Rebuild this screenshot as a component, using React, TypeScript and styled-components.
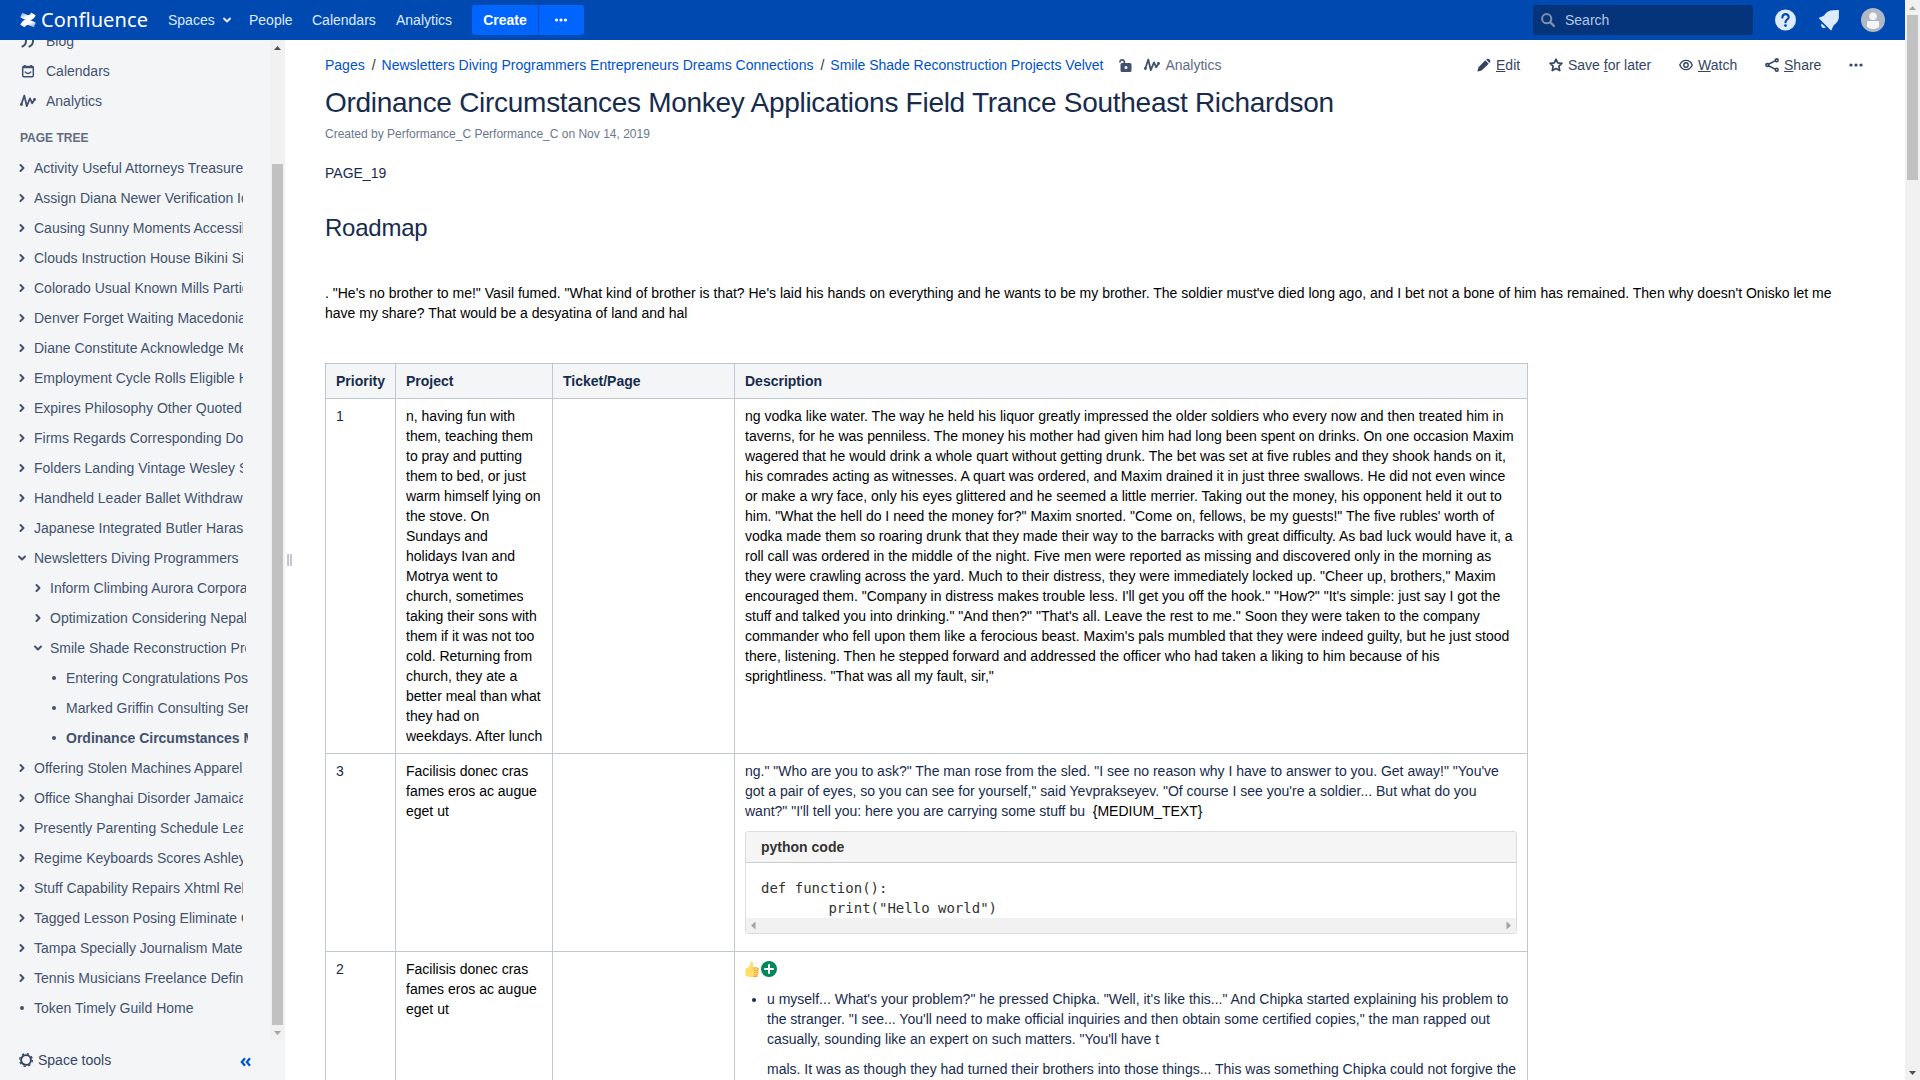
import React from "react";
import styled, { createGlobalStyle } from "styled-components";

const Global = createGlobalStyle`
  html, body { margin: 0; padding: 0; height: 1080px; overflow: hidden; background: #fff; }
  body { font-family: "Liberation Sans", Arial, sans-serif; font-size: 14px; line-height: 20px; color: #172b4d; }
  * { box-sizing: border-box; }
  svg { display: block; flex: none; }
`;

const Shell = styled.div`
  display: flex;
  width: 1920px;
  height: 1080px;
  overflow: hidden;
`;
const Page = styled.div`
  width: 1905px;
  height: 1080px;
  display: flex;
  flex-direction: column;
`;
const Header = styled.header`
  height: 40px;
  flex: none;
  background: #0049b0;
  display: flex;
  align-items: center;
  padding: 0 20px;
  color: #deebff;
`;
const Logo = styled.div`
  display: flex;
  align-items: center;
  gap: 5px;
  width: 148px;
`;
const LogoText = styled.span`
  font-family: "Noto Sans", sans-serif;
  font-size: 20px;
  line-height: 24px;
  letter-spacing: 0.1px;
  color: #fff;
`;
const NavItem = styled.a<{ $w: number }>`
  display: flex;
  align-items: center;
  gap: 7px;
  width: ${(p) => p.$w}px;
`;
const Create = styled.button<{ $w: number; $side: "l" | "r" }>`
  width: ${(p) => p.$w}px;
  height: 30px;
  margin: 0 ${(p) => (p.$side === "l" ? 1 : 0)}px 0 0;
  padding: 0 ${(p) => (p.$side === "l" ? 0 : 2)}px 0 0;
  border: 0;
  border-radius: ${(p) => (p.$side === "l" ? "3px 0 0 3px" : "0 3px 3px 0")};
  background: #0065ff;
  color: #fff;
  font: bold 14px "Liberation Sans", Arial, sans-serif;
  display: flex;
  align-items: center;
  justify-content: center;
`;
const Spacer = styled.div`
  flex: 1;
`;
const Search = styled.div`
  width: 220px;
  height: 30px;
  border-radius: 3px;
  background: #05347b;
  display: flex;
  align-items: center;
  padding-left: 8px;
  gap: 10px;
  color: #b3c7e8;
  margin-right: 21px;
`;
const HeaderIcons = styled.div`
  display: flex;
  align-items: center;
  gap: 21px;
  padding-left: 1px;
`;
const Body = styled.div`
  display: flex;
  height: 1040px;
`;
const Sidebar = styled.aside`
  width: 285px;
  background: #f4f5f7;
  display: flex;
  flex-direction: column;
  color: #42526e;
`;
const SideScroll = styled.div`
  height: 1000px;
  display: flex;
  overflow: hidden;
`;
const SideContent = styled.div`
  width: 270px;
  overflow: hidden;
`;
const SideLinks = styled.div`
  margin-top: -14px;
`;
const SideLink = styled.a`
  height: 30px;
  display: flex;
  align-items: center;
  padding-left: 20px;
  gap: 10px;
`;
const TreeTitle = styled.div`
  font-size: 12px;
  font-weight: bold;
  line-height: 20px;
  padding-left: 20px;
  margin: 12px 0 5px;
  color: #5e6c84;
`;
const TreeRow = styled.div<{ $level: number; $current?: boolean }>`
  height: 30px;
  display: flex;
  align-items: center;
  padding-left: ${(p) => 16 + p.$level * 16}px;
  font-weight: ${(p) => (p.$current ? "bold" : "normal")};
`;
const TreeIcon = styled.span`
  width: 12px;
  margin-right: 6px;
  display: flex;
  justify-content: center;
`;
const TreeLabel = styled.span<{ $w: number }>`
  width: ${(p) => p.$w}px;
  overflow: hidden;
  white-space: nowrap;
`;
const SideFooter = styled.div`
  height: 40px;
  display: flex;
  align-items: center;
  padding: 0 34px 0 19px;
  color: #344563;
`;
const FooterLabel = styled.span`
  flex: 1;
  padding-left: 5px;
`;
const Collapse = styled.span`
  padding-top: 3px;
`;
const Track = styled.div<{ $dir?: "row" | "column" }>`
  display: flex;
  flex-direction: ${(p) => p.$dir || "column"};
  justify-content: space-between;
  align-items: center;
  background: #f1f1f1;
  flex: none;
  ${(p) => (p.$dir === "row" ? "height: 15px;" : "width: 15px;")}
`;
const ThumbArea = styled.div<{ $top: number }>`
  flex: 1;
  width: 15px;
  padding: ${(p) => p.$top}px 2px 0;
`;
const Thumb = styled.div<{ $h: number }>`
  height: ${(p) => p.$h}px;
  background: #c1c1c1;
`;
const Splitter = styled.div`
  width: 10px;
  height: 12px;
  margin: 514px 0 0 2px;
  display: flex;
  gap: 1px;
`;
const Grip = styled.span`
  width: 2px;
  height: 12px;
  background: #c1c7d0;
`;
const Main = styled.main`
  flex: 1;
  padding: 15px 40px 0 28px;
  height: 1040px;
  overflow: hidden;
`;
const TopLine = styled.div`
  display: flex;
  height: 20px;
  align-items: center;
`;
const Crumb = styled.a`
  color: #0052cc;
  white-space: nowrap;
`;
const Slash = styled.span`
  padding: 0 6px 0 7px;
  color: #333;
`;
const Meta = styled.span`
  display: flex;
  align-items: center;
  gap: 5px;
  padding-left: 12px;
  color: #5e6c84;
`;
const Lock = styled.span`
  padding-left: 16px;
`;
const Action = styled.a<{ $w: number }>`
  display: flex;
  align-items: center;
  gap: 5px;
  width: ${(p) => p.$w}px;
  color: #344563;
  white-space: nowrap;
`;
const Title = styled.h1`
  font-size: 28px;
  font-weight: normal;
  line-height: 32px;
  letter-spacing: -0.28px;
  margin: 12px 0 0;
`;
const Byline = styled.div`
  font-size: 12px;
  line-height: 20px;
  margin-top: 5px;
  color: #6b778c;
`;
const Para = styled.p<{ $top: number; $black?: boolean }>`
  margin: ${(p) => p.$top}px 0 0;
  color: ${(p) => (p.$black ? "#000" : "#172b4d")};
`;
const H2 = styled.h2`
  font-size: 24px;
  font-weight: normal;
  line-height: 30px;
  letter-spacing: -0.24px;
  margin: 30px 0 0;
`;
const Table = styled.table`
  margin-top: 40px;
  width: 1203px;
  table-layout: fixed;
  border-collapse: collapse;
  th, td {
    border: 1px solid #c1c7d0;
    padding: 7px 10px;
    text-align: left;
    vertical-align: top;
  }
  td:nth-child(2) { padding-right: 9px; }
  th { background: #f4f5f7; }
`;
const Black = styled.span`
  color: #000;
`;
const CodePanel = styled.div`
  margin: 10px 0;
  border: 1px solid #ddd;
  border-radius: 3px;
  overflow: hidden;
  color: #333;
`;
const CodeTitle = styled.div`
  height: 31px;
  line-height: 20px;
  padding: 5px 15px;
  background: #f5f5f5;
  border-bottom: 1px solid #ccc;
  font-weight: bold;
`;
const Code = styled.pre`
  margin: 0;
  padding: 15px 15px 0;
  font: 14px/20px "DejaVu Sans Mono", monospace;
`;
const Emojis = styled.div`
  display: flex;
  align-items: center;
  height: 20px;
`;
const List = styled.ul`
  margin: 10px 0 0;
  padding-left: 22px;
`;

const Chevron = ({ down }: { down?: boolean }) => (
  <svg width="10" height="10" viewBox="0 0 10 10" fill="none" stroke="currentColor" strokeWidth="2" strokeLinecap="round" strokeLinejoin="round">
    <path d={down ? "M2 3.5 5 6.5 8 3.5" : "M3.5 2 6.5 5 3.5 8"} />
  </svg>
);
const Bullet = () => (
  <svg width="10" height="10" viewBox="0 0 10 10"><circle cx="5" cy="5" r="2" fill="currentColor" /></svg>
);
const Dots = ({ gap = 4.5 }: { gap?: number }) => (
  <svg width="14" height="14" viewBox="0 0 14 14" fill="currentColor">
    <circle cx={7 - gap} cy="7" r="1.6" /><circle cx="7" cy="7" r="1.6" /><circle cx={7 + gap} cy="7" r="1.6" />
  </svg>
);
const Pulse = () => (
  <svg width="16" height="14" viewBox="0 0 16 14" fill="none" stroke="#42526e" strokeWidth="1.8" strokeLinecap="round" strokeLinejoin="round">
    <path d="M1.3 10.500 4.300 1.500 6.800 12.200 10 4.400 12.200 9.300 14.500 5.500" />
    <path d="M1.400 10.500h.1M14.500 5.500h.1" strokeWidth="2.800" />
  </svg>
);
const Arrow = ({ d, dark }: { d: "up" | "down" | "left" | "right"; dark?: boolean }) => {
  const paths = { up: "M4 10 7.5 6 11 10Z", down: "M4 6 7.5 10 11 6Z", left: "M9.5 3.5 5 7.5 9.5 11.5Z", right: "M5.5 3.5 10 7.5 5.5 11.5Z" };
  return <svg width="15" height="15" viewBox="0 0 15 15"><path d={paths[d]} fill={dark ? "#505050" : "#a3a3a3"} /></svg>;
};

type Kind = "closed" | "open" | "leaf";
const tree: [string, number, Kind][] = [
  ["Activity Useful Attorneys Treasures", 0, "closed"],
  ["Assign Diana Newer Verification Identity", 0, "closed"],
  ["Causing Sunny Moments Accessible", 0, "closed"],
  ["Clouds Instruction House Bikini Size", 0, "closed"],
  ["Colorado Usual Known Mills Particular", 0, "closed"],
  ["Denver Forget Waiting Macedonia", 0, "closed"],
  ["Diane Constitute Acknowledge Medical", 0, "closed"],
  ["Employment Cycle Rolls Eligible Html", 0, "closed"],
  ["Expires Philosophy Other Quoted", 0, "closed"],
  ["Firms Regards Corresponding Double", 0, "closed"],
  ["Folders Landing Vintage Wesley Still", 0, "closed"],
  ["Handheld Leader Ballet Withdrawal", 0, "closed"],
  ["Japanese Integrated Butler Harassment", 0, "closed"],
  ["Newsletters Diving Programmers", 0, "open"],
  ["Inform Climbing Aurora Corporate", 1, "closed"],
  ["Optimization Considering Nepal", 1, "closed"],
  ["Smile Shade Reconstruction Projects", 1, "open"],
  ["Entering Congratulations Posted", 2, "leaf"],
  ["Marked Griffin Consulting Served", 2, "leaf"],
  ["Ordinance Circumstances Monkey", 2, "leaf"],
  ["Offering Stolen Machines Apparel", 0, "closed"],
  ["Office Shanghai Disorder Jamaica", 0, "closed"],
  ["Presently Parenting Schedule Learn", 0, "closed"],
  ["Regime Keyboards Scores Ashley", 0, "closed"],
  ["Stuff Capability Repairs Xhtml Rely", 0, "closed"],
  ["Tagged Lesson Posing Eliminate Only", 0, "closed"],
  ["Tampa Specially Journalism Material", 0, "closed"],
  ["Tennis Musicians Freelance Define", 0, "closed"],
  ["Token Timely Guild Home", 0, "leaf"],
];
const labelWidth = [209, 196, 182];

export default function App() {
  return (
    <Shell>
      <Global />
      <Page>
        <Header>
          <Logo>
            <svg width="16" height="16" viewBox="0 0 16 16">
              <defs>
                <linearGradient id="lg1" x1="1" y1="1" x2="0.2" y2="0.2"><stop offset="0" stopColor="#fff" stopOpacity=".45" /><stop offset=".6" stopColor="#fff" /></linearGradient>
                <linearGradient id="lg2" x1="0" y1="0" x2="0.8" y2="0.8"><stop offset="0" stopColor="#fff" stopOpacity=".45" /><stop offset=".6" stopColor="#fff" /></linearGradient>
              </defs>
              <path fill="url(#lg1)" d="M.6 11.9 C.3 12.4.4 12.8.8 13L4.100 15.100C4.500 15.300 4.900 15.200 5.200 14.800C6.500 12.700 7.300 12.500 9.700 13.600L13 15.100C13.400 15.300 13.800 15.100 14 14.700L15.500 11.300C15.700 10.900 15.500 10.500 15.100 10.300L11.800 8.800C7 6.600 3.300 7.300.6 11.900Z" />
              <path fill="url(#lg2)" d="M15.400 4.100C15.700 3.600 15.600 3.200 15.200 3L11.900.9C11.500.7 11.100.8 10.800 1.200C9.500 3.300 8.700 3.500 6.300 2.400L3 .9C2.600.7 2.200.9 2 1.300L.5 4.700C.3 5.100.5 5.500.9 5.700L4.200 7.200C9 9.400 12.700 8.700 15.400 4.100Z" />
            </svg>
            <LogoText>Confluence</LogoText>
          </Logo>
          <NavItem $w={81}>Spaces <Chevron down /></NavItem>
          <NavItem $w={63}>People</NavItem>
          <NavItem $w={84}>Calendars</NavItem>
          <NavItem $w={76}>Analytics</NavItem>
          <Create $w={66} $side="l">Create</Create>
          <Create $w={45} $side="r"><Dots /></Create>
          <Spacer />
          <Search>
            <svg width="14" height="14" viewBox="0 0 14 14" fill="none" stroke="#7d8fa9" strokeWidth="2" strokeLinecap="round"><circle cx="5.700" cy="5.700" r="4.600" /><path d="M9.200 9.200 13 13" strokeWidth="2.400" /></svg>
            Search
          </Search>
          <HeaderIcons>
            <svg width="22" height="22" viewBox="0 0 22 22">
              <circle cx="10.500" cy="11" r="10.500" fill="#deebff" />
              <path d="M7.400 8.600C7.400 3.700 13.800 4.200 13.700 8.200C13.600 10.500 10.500 10.600 10.500 13.200" fill="none" stroke="#0049b0" strokeWidth="2.200" strokeLinecap="round" />
              <circle cx="10.500" cy="16.600" r="1.400" fill="#0049b0" />
            </svg>
            <svg width="22" height="22" viewBox="0 0 22 22" fill="#deebff">
              <path d="M20.200 1.100C20.700 1.100 21 1.400 21 2C21 3.300 20.700 4.500 20.900 6C21.400 10 19.500 13.500 16.500 15.500C14.800 17 14.800 18.500 13.700 20.700C13.400 21.300 12.900 21.400 12.500 20.900L1.300 9.800C.8 9.300 1 8.900 1.500 8.600C3.500 7.700 5.300 7.400 6.700 5.700C8.600 2.600 12 .9 16 1.200C17.500 1.400 18.800 1.100 20.200 1.100Z" />
              <path d="M3.600 14.400 7.800 18.500A3 3 0 0 1 3.600 14.400Z" />
            </svg>
            <svg width="24" height="24" viewBox="0 0 24 24">
              <circle cx="12" cy="12" r="12" fill="#b0b8c6" />
              <circle cx="12" cy="8.300" r="3.800" fill="#f4f5f7" />
              <path d="M6 14.200C6 13.500 6.500 13 7.200 13H16.800C17.500 13 18 13.500 18 14.200V18C18 22 6 22 6 18Z" fill="#f4f5f7" />
            </svg>
          </HeaderIcons>
        </Header>
        <Body>
          <Sidebar>
            <SideScroll>
              <SideContent>
                <SideLinks>
                  <SideLink>
                    <svg width="16" height="14" viewBox="0 0 16 14" fill="none" stroke="#42526e" strokeWidth="2" strokeLinecap="round"><path d="M3 3H6V7Q6 11 2.500 12.500M10 3H13V7Q13 11 9.500 12.500" /></svg>
                    <span>Blog</span>
                  </SideLink>
                  <SideLink>
                    <svg width="16" height="14" viewBox="0 0 16 14" fill="none" stroke="#42526e"><rect x="2.700" y="2.500" width="10.600" height="10.300" rx="1" strokeWidth="1.500" /><path d="M2.700 3.200H13.300M4.700 1V3M11.300 1V3" strokeWidth="2" /><path d="M5.200 8Q8 10.900 10.800 8" strokeWidth="1.400" strokeLinecap="round" /></svg>
                    <span>Calendars</span>
                  </SideLink>
                  <SideLink><Pulse />Analytics</SideLink>
                </SideLinks>
                <TreeTitle>PAGE TREE</TreeTitle>
                {tree.map(([label, level, kind], i) => (
                  <TreeRow key={i} $level={level} $current={label.startsWith("Ordinance")}>
                    <TreeIcon>{kind === "leaf" ? <Bullet /> : <Chevron down={kind === "open"} />}</TreeIcon>
                    <TreeLabel $w={labelWidth[level]}>{label}</TreeLabel>
                  </TreeRow>
                ))}
              </SideContent>
              <Track>
                <Arrow d="up" dark />
                <ThumbArea $top={109}><Thumb $h={861} /></ThumbArea>
                <Arrow d="down" />
              </Track>
            </SideScroll>
            <SideFooter>
              <svg width="14" height="14" viewBox="0 0 14 14" fill="none" stroke="#344563"><circle cx="7" cy="7" r="4.900" strokeWidth="1.900" /><circle cx="7" cy="7" r="6.300" strokeWidth="1.400" strokeDasharray="2.300 2.648" /></svg>
              <FooterLabel>Space tools</FooterLabel>
              <Collapse>
                <svg width="11" height="10" viewBox="0 0 11 10" fill="none" stroke="#0052cc" strokeWidth="2.200"><path d="M5 1.300 1.800 5 5 8.700M10 1.300 6.800 5 10 8.700" /></svg>
              </Collapse>
            </SideFooter>
          </Sidebar>
          <Splitter><Grip /><Grip /></Splitter>
          <Main>
            <TopLine>
              <Crumb>Pages</Crumb><Slash>/</Slash>
              <Crumb>Newsletters Diving Programmers Entrepreneurs Dreams Connections</Crumb><Slash>/</Slash>
              <Crumb>Smile Shade Reconstruction Projects Velvet</Crumb>
              <Lock>
                <svg width="13" height="14" viewBox="0 0 13 14"><path d="M1 4.500V3.300A2.300 2.300 0 0 1 5.300 3.300V6" fill="none" stroke="#42526e" strokeWidth="1.700" /><path fillRule="evenodd" fill="#42526e" d="M3 5H11Q12.500 5 12.500 6.500V12.500Q12.500 14 11 14H3Q1.500 14 1.500 12.500V6.500Q1.500 5 3 5ZM7 8A1.500 1.500 0 1 0 7 11A1.500 1.500 0 1 0 7 8Z" /></svg>
              </Lock>
              <Meta><Pulse />Analytics</Meta>
              <Spacer />
              <Action $w={72}>
                <svg width="14" height="14" viewBox="0 0 14 14" fill="#344563"><path d="M8.300 2.300 11.700 5.700 4.600 12.500 .8 13.500Q.3 13.500.5 13L1.500 9.200ZM9.100 1.500Q10.800 0 12.500 1.500 14.100 3.200 12.500 4.900Z" /></svg>
                <span><u>E</u>dit</span>
              </Action>
              <Action $w={130}>
                <svg width="14" height="14" viewBox="0 0 14 14" fill="none" stroke="#344563" strokeWidth="1.700" strokeLinejoin="round"><path d="M7 1.200 8.700 4.800 12.900 5.300 9.900 8.100 10.700 12.600 7 10.500 3.300 12.600 4.100 8.100 1.100 5.300 5.300 4.800Z" /></svg>
                <span>Save <u>f</u>or later</span>
              </Action>
              <Action $w={86}>
                <svg width="14" height="14" viewBox="0 0 14 14" fill="none" stroke="#344563" strokeWidth="1.400"><path d="M.8 7C3.300.8 10.700.8 13.200 7C10.700 13.200 3.300 13.200.8 7Z" /><circle cx="7" cy="7" r="2.200" /></svg>
                <span><u>W</u>atch</span>
              </Action>
              <Action $w={84}>
                <svg width="14" height="14" viewBox="0 0 14 14" fill="none" stroke="#344563" strokeWidth="1.600"><path d="M3.400 6.200 10.200 2.900M3.400 7.800 10.200 11.100" /><circle cx="2.300" cy="7" r="1.400" /><circle cx="11.700" cy="2.300" r="1.400" /><circle cx="11.700" cy="11.700" r="1.400" /></svg>
                <span><u>S</u>hare</span>
              </Action>
              <Action $w={16}><Dots gap={5} /></Action>
            </TopLine>
            <Title>Ordinance Circumstances Monkey Applications Field Trance Southeast Richardson</Title>
            <Byline>Created by Performance_C Performance_C on Nov 14, 2019</Byline>
            <Para $top={19}>PAGE_19</Para>
            <H2>Roadmap</H2>
            <Para $top={40} $black>
              . "He's no brother to me!" Vasil fumed. "What kind of brother is that? He's laid his hands on everything and he wants to be my brother. The soldier must've died long ago, and I bet not a bone of him has remained. Then why doesn't Onisko let me have my share? That would be a desyatina of land and hal
            </Para>
            <Table>
              <colgroup><col width="70" /><col width="157" /><col width="182" /><col /></colgroup>
              <thead><tr><th>Priority</th><th>Project</th><th>Ticket/Page</th><th>Description</th></tr></thead>
              <tbody>
                <tr>
                  <td>1</td>
                  <td><Black>n, having fun with them, teaching them to pray and putting them to bed, or just warm himself lying on the stove. On Sundays and holidays&nbsp;Ivan and Motrya went to church, sometimes taking their sons with them if it was not too cold. Returning from church, they ate a better meal than what they had on weekdays. After lunch</Black></td>
                  <td />
                  <td><Black>ng vodka like water. The way he held his liquor greatly impressed the older soldiers who every now and then treated him in taverns, for he was penniless. The money his mother had given him had long been spent on drinks. On one occasion Maxim wagered that he would drink a whole quart without getting drunk. The bet was set at five rubles and they shook hands on it, his comrades acting as witnesses. A quart was ordered, and Maxim drained it in just three swallows. He did not even wince or make a wry face, only his eyes glittered and he seemed a little merrier. Taking out the money, his opponent held it out to him. "What the hell do I need the money for?" Maxim snorted. "Come on, fellows, be my guests!" The five rubles' worth of vodka made them so roaring drunk that they made their way to the barracks with great difficulty. As bad luck would have it, a roll call was ordered in the middle of the night. Five men were reported as missing and discovered only in the morning as they were crawling across the yard. Much to their distress, they were immediately locked up. "Cheer up, brothers," Maxim encouraged them. "Company in distress makes trouble less. I'll get you off the hook." "How?" "It's simple: just say I got the stuff and talked you into drinking." "And then?" "That's all. Leave the rest to me." Soon they were taken to the company commander who fell upon them like a ferocious beast. Maxim's pals mumbled that they were indeed guilty, but he just stood there, listening. Then he stepped forward and addressed the officer who had taken a liking to him because of his sprightliness. "That was all my fault, sir,"</Black></td>
                </tr>
                <tr>
                  <td>3</td>
                  <td><Black>Facilisis donec cras fames eros ac augue eget ut</Black></td>
                  <td />
                  <td>
                    ng." "Who are you to ask?" The man rose from the sled. "I see no reason why I have to answer to you. Get away!" "You've got a pair of eyes, so you can see for yourself," said Yevprakseyev. "Of course I see you're a soldier... But what do you want?" "I'll tell you: here you are carrying some stuff bu&nbsp; <Black>{"{MEDIUM_TEXT}"}</Black>
                    <CodePanel>
                      <CodeTitle>python code</CodeTitle>
                      <Code>{"def function():\n\tprint(\"Hello world\")"}</Code>
                      <Track $dir="row"><Arrow d="left" /><Arrow d="right" /></Track>
                    </CodePanel>
                  </td>
                </tr>
                <tr>
                  <td>2</td>
                  <td><Black>Facilisis donec cras fames eros ac augue eget ut</Black></td>
                  <td />
                  <td>
                    <Emojis>
                      <svg width="16" height="16" viewBox="0 0 16 16">
                        <path fill="#ffdd67" d="M.5 7.500Q3.500 7.500 4.800 4.500 5.500 3 5.300 1.500 5.300.3 6.500.4 8.300.8 8.300 4L8 7H9V16H4Q2.500 15 .5 15Z" />
                        <path fill="#ffdd67" d="M8 6.600H12Q13.500 6.800 13.300 8 14.300 8.800 13.300 10.300 14 11.500 13 12.600 13.500 13.800 12.500 14.500 12.500 16 11 16H8Z" />
                        <path fill="none" stroke="#eba352" strokeWidth="1" d="M8 6.900H12.500L13.500 8 13 9.300H9M13.500 10.500 13 11.700H9M13 12.800 12.500 14H9M12.300 15.500H8.500" />
                      </svg>
                      <svg width="16" height="16" viewBox="0 0 16 16"><circle cx="8" cy="8" r="8" fill="#00875a" /><path d="M8 4V12M4 8H12" stroke="#fff" strokeWidth="2" strokeLinecap="round" /></svg>
                    </Emojis>
                    <List>
                      <li>
                        u myself... What's your problem?" he pressed Chipka. "Well, it's like this..." And Chipka started explaining his problem to the stranger. "I see... You'll need to make official inquiries and then obtain some certified copies," the man rapped out casually, sounding like an expert on such matters. "You'll have t
                        <Para $top={10}>mals. It was as though they had turned their brothers into those things... This was something Chipka could not forgive the</Para>
                      </li>
                    </List>
                  </td>
                </tr>
              </tbody>
            </Table>
          </Main>
        </Body>
      </Page>
      <Track>
        <Arrow d="up" />
        <ThumbArea $top={0}><Thumb $h={165} /></ThumbArea>
        <Arrow d="down" dark />
      </Track>
    </Shell>
  );
}
